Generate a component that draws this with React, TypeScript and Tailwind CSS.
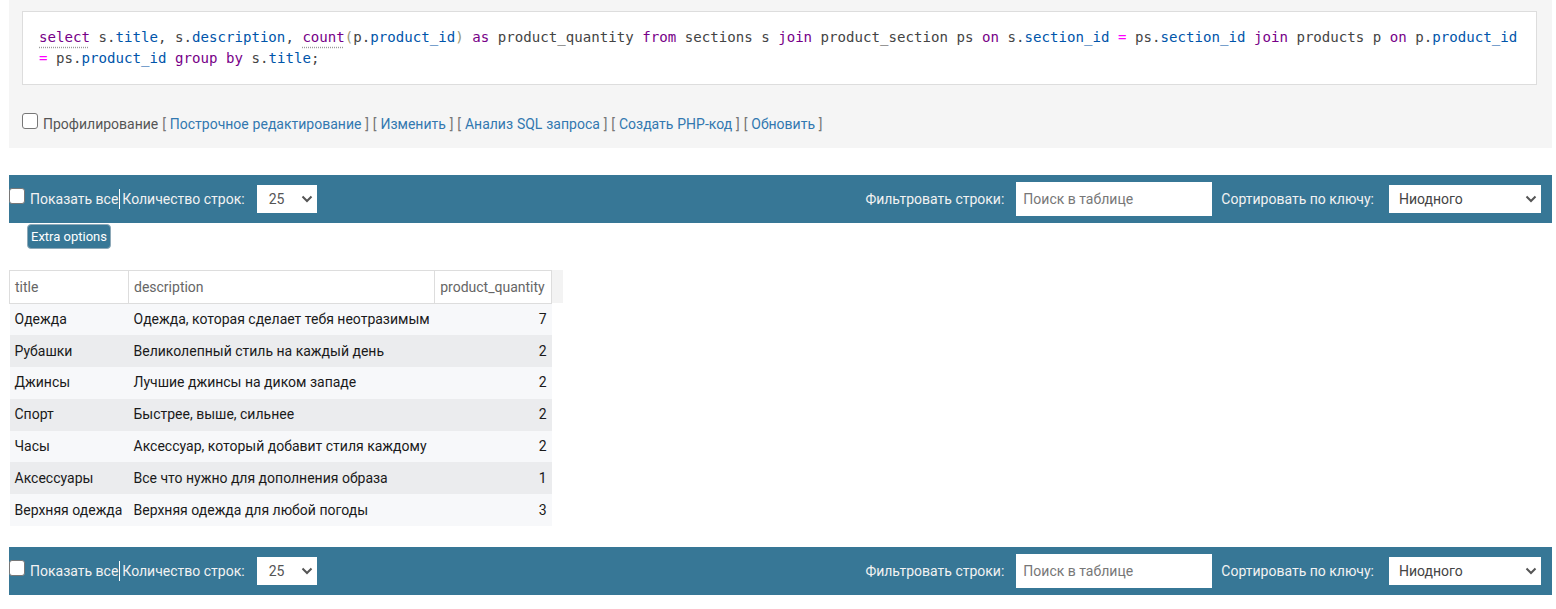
import React from "react";

type Tok = [string, string];

const line1: Tok[] = [
  ["select", "ku"], [" s.", ""], ["title", "v"], [", s.", ""], ["description", "v"], [", ", ""],
  ["count", "ku"], ["(", "b"], ["p.", ""], ["product_id", "v"], [")", "b"], [" ", ""], ["as", "k"],
  [" product_quantity ", ""], ["from", "k"], [" sections s ", ""], ["join", "k"], [" product_section ps ", ""],
  ["on", "k"], [" s.", ""], ["section_id", "v"], [" ", ""], ["=", "o"], [" ps.", ""], ["section_id", "v"],
  [" ", ""], ["join", "k"], [" products p ", ""], ["on", "k"], [" p.", ""], ["product_id", "v"],
];

const line2: Tok[] = [
  ["=", "o"], [" ps.", ""], ["product_id", "v"], [" ", ""], ["group", "k"], [" ", ""], ["by", "k"],
  [" s.", ""], ["title", "v"], [";", ""],
];

const tokClass: Record<string, string> = {
  "": "text-[#444]",
  k: "text-[#770088]",
  ku: "text-[#770088] underline decoration-dotted decoration-[#999] underline-offset-[5px]",
  v: "text-[#0055aa]",
  b: "text-[#999977]",
  o: "text-[#ff00ff]",
};

const CodeLine = ({ toks }: { toks: Tok[] }) => (
  <div className="whitespace-pre leading-[21px]">
    {toks.map(([t, c], i) => (
      <span key={i} className={tokClass[c]}>
        {t}
      </span>
    ))}
  </div>
);

const rows = [
  ["Одежда", "Одежда, которая сделает тебя неотразимым", "7"],
  ["Рубашки", "Великолепный стиль на каждый день", "2"],
  ["Джинсы", "Лучшие джинсы на диком западе", "2"],
  ["Спорт", "Быстрее, выше, сильнее", "2"],
  ["Часы", "Аксессуар, который добавит стиля каждому", "2"],
  ["Аксессуары", "Все что нужно для дополнения образа", "1"],
  ["Верхняя одежда", "Верхняя одежда для любой погоды", "3"],
];

const Chevron = () => (
  <svg width="12" height="8" viewBox="0 0 12 8" fill="none">
    <polyline points="1.5,1.5 6,6 10.5,1.5" stroke="#555" strokeWidth="2" />
  </svg>
);

const Box = () => (
  <span className="block w-[16px] h-[16px] shrink-0 rounded-[3px] border-[1.5px] border-[#777] bg-white" />
);

const Link = ({ children }: { children: React.ReactNode }) => (
  <>
    <span className="text-[#777]">[ </span>
    <span className="text-[#3278b0]">{children}</span>
    <span className="text-[#777]"> ]</span>
  </>
);

const NavBar = () => (
  <div className="flex h-[48px] items-center justify-between bg-[#377796] pr-[11px] text-[14px] text-[#f2f2f2]">
    <div className="flex items-center">
      <span className="mb-[6px]">
        <Box />
      </span>
      <span className="ml-[5px]">Показать все</span>
      <span className="ml-[1px] h-[20px] w-px bg-white" />
      <span className="ml-[2px]">Количество строк:</span>
      <div className="ml-[12px] flex h-[28px] w-[60px] items-center justify-between bg-white pl-[12px] pr-[4px] text-[#555]">
        <span>25</span>
        <Chevron />
      </div>
    </div>
    <div className="flex items-center">
      <span>Фильтровать строки:</span>
      <div className="ml-[12px] flex h-[34px] w-[196px] items-center bg-white pl-[7px] text-[#777]">
        Поиск в таблице
      </div>
      <span className="ml-[9px]">Сортировать по ключу:</span>
      <div className="ml-[15px] flex h-[28px] w-[152px] items-center justify-between bg-white pl-[10px] pr-[4px] text-[#444]">
        <span>Ниодного</span>
        <Chevron />
      </div>
    </div>
  </div>
);

export default function App() {
  return (
    <div className="min-h-screen bg-white pl-[9px] pr-[4px] font-['Roboto','Liberation_Sans',sans-serif] text-[14px]">
      <div className="bg-[#f5f5f5] pt-[11px] pb-[14px]">
        <div className="ml-[13px] mr-[15px] border border-[#ddd] bg-white px-[16px] py-[15px] font-['DejaVu_Sans_Mono',monospace] text-[14.12px]">
          <CodeLine toks={line1} />
          <CodeLine toks={line2} />
        </div>
        <div className="ml-[13px] mt-[28px] flex items-start">
          <Box />
          <span className="ml-[5px] mt-[1px] leading-[20px] text-[#555] [word-spacing:0.4px]">
            Профилирование <Link>Построчное редактирование</Link> <Link>Изменить</Link>{" "}
            <Link>Анализ SQL запроса</Link> <Link>Создать PHP-код</Link> <Link>Обновить</Link>
          </span>
        </div>
      </div>

      <div className="mt-[27px]">
        <NavBar />
      </div>

      <button className="ml-[18px] mt-[1px] h-[25px] w-[84px] rounded-[4px] border border-[#8ea9b8] bg-[#377796] text-[13px] text-white">
        Extra options
      </button>

      <div className="mt-[21px] flex items-start">
        <table className="table-fixed border-collapse">
          <colgroup>
            <col className="w-[119px]" />
            <col className="w-[305px]" />
            <col className="w-[117px]" />
          </colgroup>
          <thead>
            <tr className="h-[33px] bg-white text-[#666]">
              <th className="border border-[#ddd] px-[5px] text-left font-normal">title</th>
              <th className="border border-[#ddd] px-[5px] text-left font-normal">description</th>
              <th className="border border-[#ddd] px-[5px] text-left font-normal">product_quantity</th>
            </tr>
          </thead>
          <tbody>
            {rows.map((r, i) => (
              <tr key={i} className={`h-[31.8px] text-[#1a1a1a] ${i % 2 ? "bg-[#ebecee]" : "bg-[#f7f8fa]"}`}>
                <td className="whitespace-nowrap px-[5px]">{r[0]}</td>
                <td className="whitespace-nowrap px-[5px]">{r[1]}</td>
                <td className="px-[5px] text-right">{r[2]}</td>
              </tr>
            ))}
          </tbody>
        </table>
        <div className="h-[33px] w-[11px] bg-[#f3f3f3]" />
      </div>

      <div className="mt-[21px]">
        <NavBar />
      </div>
    </div>
  );
}
